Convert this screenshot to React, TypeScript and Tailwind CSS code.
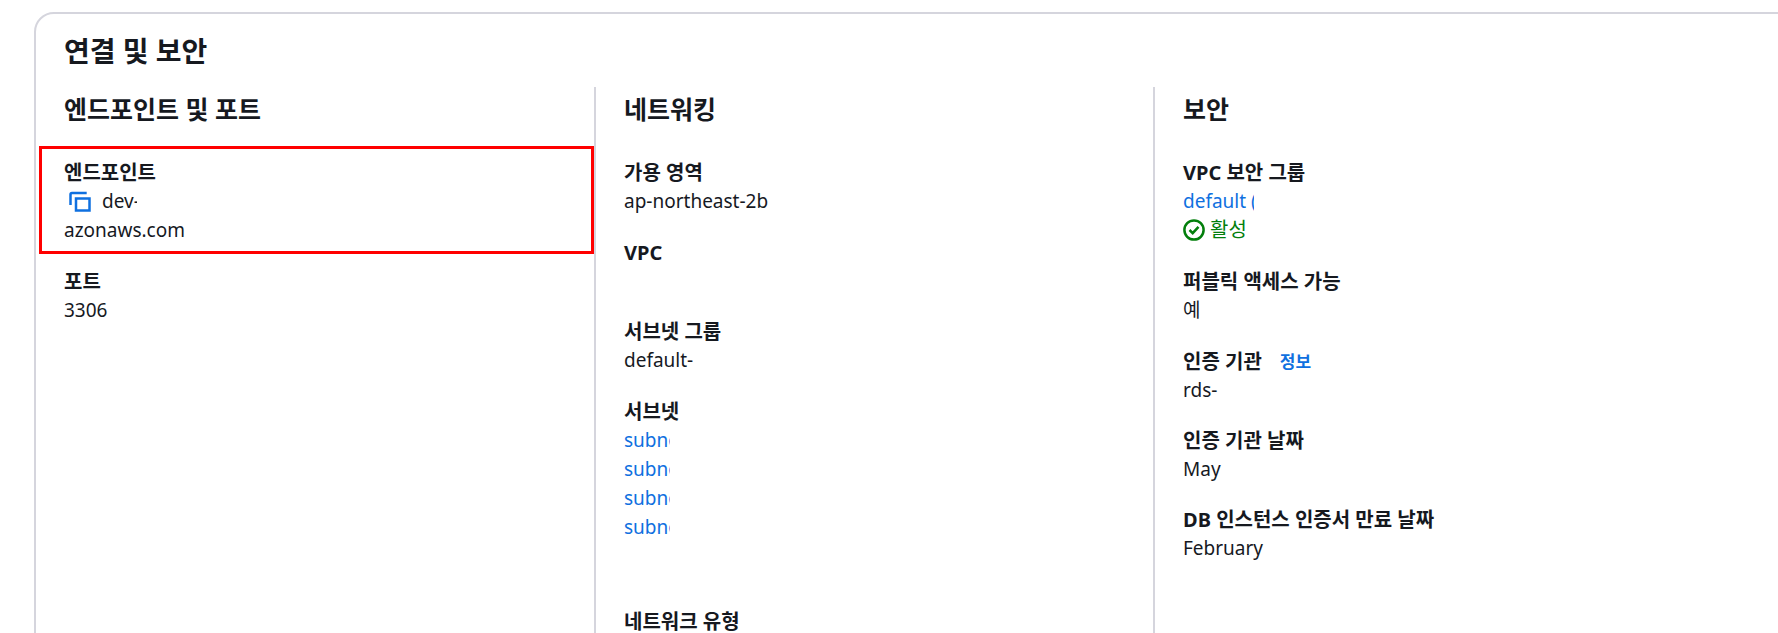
import React from 'react';

const FONT = "font-['Noto_Sans','Noto_Sans_CJK_KR',sans-serif]";

function Label({ children }: { children: React.ReactNode }) {
  return <div className="text-[20px] leading-[29px] font-bold text-[#16191f]">{children}</div>;
}

function Value({ children }: { children: React.ReactNode }) {
  return <div className="text-[19px] leading-[29px] text-[#16191f]">{children}</div>;
}

function Clipped({ width, children }: { width: string; children: React.ReactNode }) {
  return <span className={`inline-block overflow-hidden whitespace-nowrap align-bottom ${width}`}>{children}</span>;
}

function SubnetLink() {
  return (
    <div className="text-[19px] leading-[29px] text-[#0f70e0]">
      <Clipped width="w-[46px]">subnet</Clipped>
    </div>
  );
}

function CopyIcon() {
  return (
    <svg width="24" height="24" viewBox="0 0 24 24" fill="none" stroke="#0f70e0" strokeWidth="2.5">
      <path d="M2.5 15V4.5a1.5 1.5 0 0 1 1.5-1.5h14.7" />
      <rect x="8" y="8.5" width="13.5" height="12" />
    </svg>
  );
}

function ActiveIcon() {
  return (
    <svg width="22" height="22" viewBox="0 0 22 22" fill="none" stroke="#037f0c" strokeWidth="2.5">
      <circle cx="11" cy="11" r="9.6" />
      <path d="M6.5 11l3.2 3.2 5.8-6.4" />
    </svg>
  );
}

export default function App() {
  return (
    <div className={`h-[633px] w-full overflow-hidden bg-white pt-3 pl-[34px] ${FONT}`}>
      <div className="w-[1800px] h-[800px] rounded-[20px] border-2 border-[#d5d5dd] bg-white">
        <h2 className="pl-7 pt-[19px] text-[28px] leading-[36px] font-bold text-[#16191f]">연결 및 보안</h2>

        <div className="mt-[18px] grid grid-cols-[558px_559px_1fr]">
          {/* Endpoint and port */}
          <div>
            <h3 className="pl-7 pt-1 text-[25px] leading-[36px] font-bold text-[#16191f]">엔드포인트 및 포트</h3>
            <div className="relative mt-[19px] ml-[3px] pl-[25px] pt-[12px] pb-[9px]">
              <Label>엔드포인트</Label>
              <div className="flex items-center gap-[10px] pl-1 text-[19px] leading-[29px] text-[#16191f]">
                <CopyIcon />
                <Clipped width="w-[35px]">dev-rds</Clipped>
              </div>
              <Value>azonaws.com</Value>
              <div className="absolute inset-0 border-[3px] border-[#f00]" />
            </div>
            <div className="mt-[13px] pl-7">
              <Label>포트</Label>
              <Value>3306</Value>
            </div>
          </div>

          {/* Networking */}
          <div className="border-l-2 border-[#d5d5dd] pl-7">
            <h3 className="pt-1 text-[25px] leading-[36px] font-bold text-[#16191f]">네트워킹</h3>
            <div className="mt-[31px]">
              <Label>가용 영역</Label>
              <Value>ap-northeast-2b</Value>
            </div>
            <div className="mt-[22px] h-[57px]">
              <Label>VPC</Label>
            </div>
            <div className="mt-[22px]">
              <Label>서브넷 그룹</Label>
              <Value>default-</Value>
            </div>
            <div className="mt-[22px]">
              <Label>서브넷</Label>
              <SubnetLink />
              <SubnetLink />
              <SubnetLink />
              <SubnetLink />
            </div>
            <div className="mt-[65px]">
              <Label>네트워크 유형</Label>
            </div>
          </div>

          {/* Security */}
          <div className="border-l-2 border-[#d5d5dd] pl-7">
            <h3 className="pt-1 text-[25px] leading-[36px] font-bold text-[#16191f]">보안</h3>
            <div className="mt-[31px]">
              <Label>VPC 보안 그룹</Label>
              <div className="text-[19px] leading-[29px] text-[#0f70e0]">
                <Clipped width="w-[71px]">default (</Clipped>
              </div>
              <div className="flex items-center gap-[5px] text-[20px] leading-[27px] text-[#037f0c]">
                <ActiveIcon />
                <span>활성</span>
              </div>
            </div>
            <div className="mt-[24px]">
              <Label>퍼블릭 액세스 가능</Label>
              <Value>예</Value>
            </div>
            <div className="mt-[22px]">
              <div className="flex items-center gap-[18px]">
                <Label>인증 기관</Label>
                <span className="text-[17px] leading-[29px] font-bold text-[#0f70e0]">정보</span>
              </div>
              <Value>rds-</Value>
            </div>
            <div className="mt-[21px]">
              <Label>인증 기관 날짜</Label>
              <Value>May</Value>
            </div>
            <div className="mt-[21px]">
              <Label>DB 인스턴스 인증서 만료 날짜</Label>
              <Value>February</Value>
            </div>
          </div>
        </div>
      </div>
    </div>
  );
}
